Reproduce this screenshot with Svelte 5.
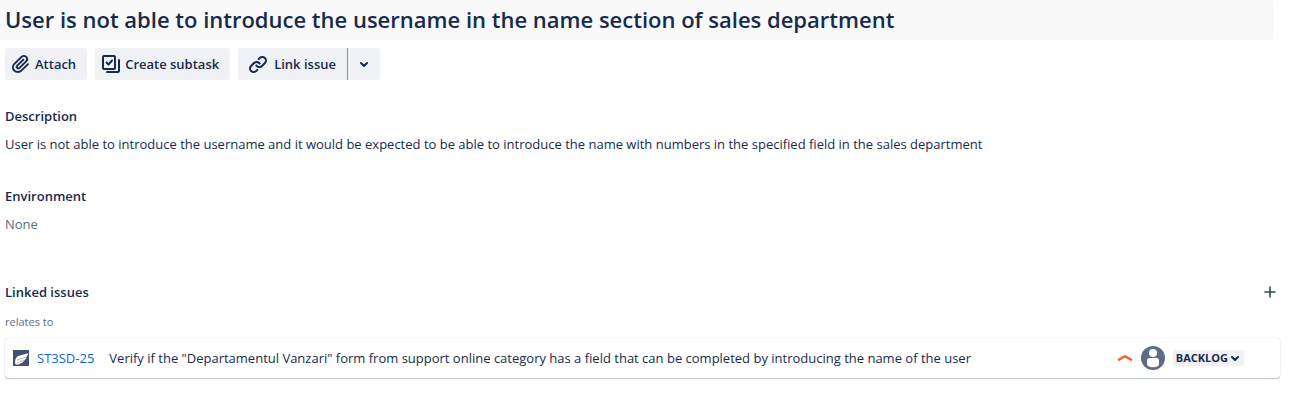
<script>
  const summary = 'User is not able to introduce the username in the name section of sales department';
  const description =
    'User is not able to introduce the username and it would be expected to be able to introduce the name with numbers in the specified field in the sales department';
  const linked = [
    {
      key: 'ST3SD-25',
      title:
        'Verify if the "Departamentul Vanzari" form from support online category has a field that can be completed by introducing the name of the user',
      status: 'BACKLOG'
    }
  ];
</script>

<main>
  <h1>{summary}</h1>

  <div class="toolbar">
    <button class="btn" type="button">
      <svg width="24" height="24" viewBox="0 0 24 24" aria-hidden="true">
        <path d="M11.643 17.965c-1.53 1.495-4.016 1.496-5.542.004a3.773 3.773 0 0 1 .002-5.412l7.147-6.987a2.316 2.316 0 0 1 3.233-.003c.893.873.895 2.282.004 3.153l-6.703 6.551a.653.653 0 0 1-.914-.008.62.62 0 0 1 0-.902l6.229-6.087a.941.941 0 0 0 0-1.353.995.995 0 0 0-1.384 0l-6.23 6.087a2.502 2.502 0 0 0 0 3.607 2.643 2.643 0 0 0 3.683.009l6.703-6.551a4.177 4.177 0 0 0-.004-5.859c-1.644-1.607-4.349-1.606-6.001.009l-7.147 6.987c-2.294 2.241-2.294 5.870 0 8.112 2.292 2.240 6.014 2.239 8.308-.004l6.687-6.536a.943.943 0 0 0 0-1.353.995.995 0 0 0-1.384 0l-6.687 6.536z" fill="currentColor" fill-rule="evenodd" />
      </svg>
      Attach
    </button>
    <button class="btn" type="button">
      <svg width="24" height="24" viewBox="0 0 24 24" aria-hidden="true" fill="none" stroke="currentColor" stroke-width="2">
        <rect x="4" y="4" width="12" height="13" rx="1" />
        <path d="M7.500 10.500l2 2L13 8.500" stroke-linecap="round" stroke-linejoin="round" />
        <path d="M20 8v11a1 1 0 0 1-1 1H8" stroke-linecap="round" />
      </svg>
      Create subtask
    </button>
    <div class="split">
      <button class="btn link" type="button">
        <svg width="24" height="24" viewBox="0 0 24 24" aria-hidden="true" fill="currentColor">
          <path d="M12.856 5.457l-.937.920a1.002 1.002 0 0 0 0 1.437 1.047 1.047 0 0 0 1.463 0l.984-.966c.967-.950 2.542-1.135 3.602-.288a2.540 2.540 0 0 1 .203 3.810l-2.903 2.852a2.646 2.646 0 0 1-3.696 0l-1.110-1.090L9 13.570l1.108 1.089c1.822 1.788 4.802 1.788 6.622 0l2.905-2.852a4.558 4.558 0 0 0-.357-6.820c-1.893-1.517-4.695-1.226-6.422.470" />
          <path d="M11.144 19.543l.937-.920a1.002 1.002 0 0 0 0-1.437 1.047 1.047 0 0 0-1.462 0l-.985.966c-.967.950-2.542 1.135-3.602.288a2.540 2.540 0 0 1-.203-3.810l2.903-2.852a2.646 2.646 0 0 1 3.696 0l1.110 1.090L15 11.430l-1.108-1.089c-1.822-1.788-4.802-1.788-6.622 0l-2.905 2.852a4.558 4.558 0 0 0 .357 6.820c1.893 1.517 4.695 1.226 6.422-.470" />
        </svg>
        Link issue
      </button>
      <button class="btn more" type="button" aria-label="More link options">
        <svg width="10" height="10" viewBox="0 0 10 10" aria-hidden="true" fill="none" stroke="currentColor" stroke-width="2" stroke-linecap="round" stroke-linejoin="round">
          <path d="M2 4l3 3 3-3" />
        </svg>
      </button>
    </div>
  </div>

  <section>
    <h2>Description</h2>
    <p>{description}</p>
  </section>

  <section>
    <h2>Environment</h2>
    <p class="muted">None</p>
  </section>

  <section class="links">
    <header>
      <h2>Linked issues</h2>
      <button class="add" type="button" aria-label="Add linked issue">
        <svg width="12" height="12" viewBox="0 0 12 12" aria-hidden="true" stroke="currentColor" stroke-width="1.600" stroke-linecap="round">
          <path d="M6 1v10M1 6h10" />
        </svg>
      </button>
    </header>
    <h3>relates to</h3>
    {#each linked as issue (issue.key)}
      <article class="card">
        <svg class="type" width="16" height="16" viewBox="0 0 16 16" aria-hidden="true">
          <rect width="16" height="16" fill="#42526e" />
          <path d="M2.500 14.200C1.500 10.500 2.500 7 6 5.800L15 3.200C15.200 5.200 14 6.800 12.500 7.300z" fill="#fff" />
          <path d="M2.500 11L13.500 6.600C13.500 8.600 12.500 9.900 10.800 10.400z" fill="#f4f5f7" />
          <path d="M2.500 14.200L3 11.800 11.500 9.800C11.200 11.600 10 12.500 8 12.900 6.500 14.400 4.500 15 2.500 14.200z" fill="#fff" />
          <path d="M4 10L13 7M4 12.600L11 10.300" fill="none" stroke="#a5adba" stroke-width="0.800" />
        </svg>
        <a href="#{issue.key}">{issue.key}</a>
        <span class="title">{issue.title}</span>
        <svg class="priority" width="16" height="8" viewBox="0 0 16 8" role="img" aria-label="High priority" fill="none" stroke="#ff5630" stroke-width="2.300" stroke-linecap="round" stroke-linejoin="round">
          <path d="M1.800 5.700L8 2.200 14.200 5.700" />
        </svg>
        <svg class="avatar" width="24" height="24" viewBox="0 0 24 24" role="img" aria-label="Unassigned">
          <circle cx="12" cy="12" r="12" fill="#5e6c84" />
          <circle cx="12" cy="7" r="4" fill="#fff" />
          <path d="M6 14.500a2.500 2.500 0 0 1 2.500-2.500h7a2.500 2.500 0 0 1 2.500 2.500v3.500c0 2-2.500 3.200-6 3.200s-6-1.200-6-3.200z" fill="#fff" />
        </svg>
        <button class="status" type="button">
          {issue.status}
          <svg width="8" height="8" viewBox="0 0 8 8" aria-hidden="true" fill="none" stroke="currentColor" stroke-width="2" stroke-linecap="round" stroke-linejoin="round">
            <path d="M1 3l3 3 3-3" />
          </svg>
        </button>
      </article>
    {/each}
  </section>
</main>

<style>
  :global(body) {
    background: #fff;
  }
  main {
    padding-right: 14px;
    color: #172b4d;
    font: 13px/20px 'Open Sans', 'Noto Sans', sans-serif;
  }
  h1,
  h2,
  h3,
  p {
    margin: 0;
  }
  h1 {
    margin-right: 6px;
    padding: 5px 5px 7px;
    background: #f9f9f9;
    border-radius: 0 3px 3px 0;
    font-size: 22px;
    line-height: 28px;
    font-weight: 600;
  }
  button {
    border: 0;
    color: inherit;
    font: inherit;
    cursor: pointer;
  }
  .toolbar {
    display: flex;
    gap: 8px;
    padding: 8px 5px 0;
  }
  .btn {
    display: flex;
    align-items: center;
    gap: 2px;
    height: 32px;
    padding: 0 11px 0 4px;
    background: #f0f1f5;
    border-radius: 3px;
    font-weight: 600;
    white-space: nowrap;
  }
  .split {
    display: flex;
  }
  .link {
    gap: 4px;
    padding-left: 8px;
    border-right: 1px solid #8290a5;
    border-radius: 3px 0 0 3px;
  }
  .more {
    padding: 0 11px;
    border-radius: 0 3px 3px 0;
  }
  section {
    padding: 26px 5px 16px;
  }
  section p {
    margin-top: 8px;
  }
  section + section {
    padding-top: 16px;
  }
  h2 {
    font-size: 13px;
    line-height: 20px;
    font-weight: 600;
  }
  .muted,
  h3 {
    color: #5e6c84;
  }
  section.links {
    padding: 32px 0 16px 5px;
  }
  header {
    display: flex;
    align-items: center;
    justify-content: space-between;
  }
  .add {
    display: flex;
    padding: 4px;
    background: none;
    color: #344563;
  }
  h3 {
    margin: 12px 0 8px;
    font-size: 11px;
    line-height: 16px;
    font-weight: 400;
  }
  .card {
    display: flex;
    align-items: center;
    min-height: 24px;
    padding: 8px 36px 8px 8px;
    border-radius: 3px;
    box-shadow: 0 1px 1px rgba(9, 30, 66, 0.25), 0 0 1px rgba(9, 30, 66, 0.31);
  }
  svg {
    flex: none;
  }
  a {
    margin: 0 15px 0 8px;
    color: #0c66e4;
    text-decoration: none;
    white-space: nowrap;
  }
  .title {
    flex: 1;
    min-width: 0;
  }
  .avatar {
    margin: 0 8px;
  }
  .status {
    display: flex;
    align-items: center;
    gap: 3px;
    padding: 0 5px 0 3px;
    background: #f0f1f5;
    border-radius: 3px;
    font-size: 11px;
    line-height: 16px;
    font-weight: 700;
  }
</style>
